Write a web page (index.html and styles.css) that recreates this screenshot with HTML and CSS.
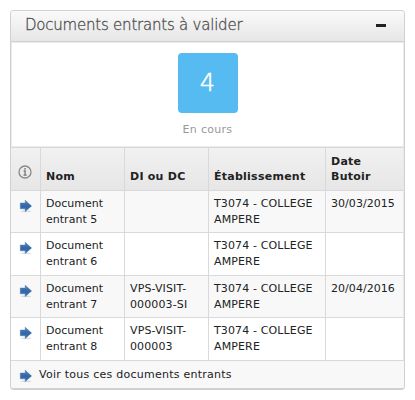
FILE: index.html
```html
<!DOCTYPE html>
<html lang="fr">
<head>
<meta charset="utf-8">
<title>Documents entrants</title>
<link rel="stylesheet" href="styles.css">
</head>
<body>
<svg class="defs" aria-hidden="true">
  <linearGradient id="blue" x1="0" y1="0" x2="0" y2="1"><stop offset="0" stop-color="#5c8cc6"/><stop offset=".5" stop-color="#3465a4"/><stop offset="1" stop-color="#3b74b8"/></linearGradient>
  <symbol id="arrow" viewBox="0 0 14 14"><ellipse cx="7" cy="12.3" rx="5" ry=".9" fill="#000" opacity=".13"/><path d="M1.3 4h4.9V1.2L12.6 7l-6.4 5.6V9.8H1.3z" fill="url(#blue)" stroke="#3a6cae" stroke-width=".4"/></symbol>
</svg>
<section class="panel">
  <header class="panel-head"><h1>Documents entrants à valider</h1><span class="collapse"></span></header>
  <div class="summary"><div class="tile">4</div><p>En cours</p></div>
  <table>
    <colgroup><col class="c1"><col class="c2"><col class="c3"><col class="c4"><col class="c5"></colgroup>
    <thead><tr><th class="ic"><svg class="info" viewBox="0 0 14 14"><circle cx="7" cy="7" r="6" fill="none" stroke="#888" stroke-width="1.3"/><path d="M5.6 6H7.1V10M5.5 10.1h3.2" fill="none" stroke="#777" stroke-width="1.3"/><circle cx="7" cy="3.8" r=".9" fill="#777"/></svg></th><th>Nom</th><th>DI ou DC</th><th>Établissement</th><th>Date Butoir</th></tr></thead>
    <tbody>
      <tr class="odd"><td class="ic"><svg class="arrow"><use href="#arrow"/></svg></td><td>Document entrant 5</td><td></td><td>T3074 - COLLEGE AMPERE</td><td>30/03/2015</td></tr>
      <tr class="tall"><td class="ic"><svg class="arrow"><use href="#arrow"/></svg></td><td>Document entrant 6</td><td></td><td>T3074 - COLLEGE AMPERE</td><td></td></tr>
      <tr class="odd"><td class="ic"><svg class="arrow"><use href="#arrow"/></svg></td><td>Document entrant 7</td><td>VPS-VISIT-000003-SI</td><td>T3074 - COLLEGE AMPERE</td><td>20/04/2016</td></tr>
      <tr class="tall"><td class="ic"><svg class="arrow"><use href="#arrow"/></svg></td><td>Document entrant 8</td><td>VPS-VISIT-000003</td><td>T3074 - COLLEGE AMPERE</td><td></td></tr>
    </tbody>
  </table>
  <footer><svg class="arrow"><use href="#arrow"/></svg><span>Voir tous ces documents entrants</span></footer>
</section>
</body>
</html>
```
FILE: styles.css
```css
* { box-sizing: border-box; }
body { margin: 0; padding: 10px; background: #fff; color: #222; font: 11px/15.5px "DejaVu Sans", sans-serif; letter-spacing: .2px; }
.defs { position: absolute; width: 0; height: 0; }
.panel { width: 395px; height: 380px; border: 1px solid #d0d0d0; border-bottom-width: 2px; border-radius: 4px; overflow: hidden; }
.panel-head { height: 31px; display: flex; align-items: center; justify-content: space-between; padding: 0 18px 2px 14px; border-bottom: 1px solid #d0d0d0; background: linear-gradient(#fafafa, #e6e6e6); }
h1 { margin: 0; font: 200 15px/20px "DejaVu Sans Light", "DejaVu Sans", sans-serif; letter-spacing: -.22px; color: #444; -webkit-text-stroke: .3px #555; }
.collapse { width: 10px; height: 3px; background: #222; }
.summary { height: 105px; padding-top: 10px; border: 1px solid #ebebeb; display: flex; flex-direction: column; align-items: center; }
.tile { width: 60px; height: 60px; border-radius: 4px; background: #55bbf0; color: #fff; font: 200 24px/60px "DejaVu Sans Light", "DejaVu Sans", sans-serif; text-align: center; letter-spacing: 0; -webkit-text-stroke: .5px #fff; }
.summary p { margin: 9px 0 0; color: #999; letter-spacing: .3px; }
table { width: 393px; table-layout: fixed; border-collapse: separate; border-spacing: 0; }
.c1 { width: 30px; } .c2, .c3 { width: 84px; } .c4 { width: 117px; } .c5 { width: 78px; }
th, td { border-right: 1px solid #d9d9d9; border-bottom: 1px solid #d9d9d9; padding: 5px 4px 0 5px; text-align: left; vertical-align: top; }
th:last-child, td:last-child { border-right-color: #e8e8e8; }
th { height: 44px; border-top: 1px solid #d9d9d9; background: linear-gradient(#f1f1f1, #e6e6e6); line-height: 15px; padding: 0 4px 6px 5px; vertical-align: bottom; letter-spacing: .25px; }
td { height: 42px; }
td:nth-child(2) { letter-spacing: .02px; }
td:nth-child(3) { letter-spacing: .12px; }
td:nth-child(4) { letter-spacing: .13px; }
td:last-child { letter-spacing: .05px; }
.tall td { height: 43px; }
.odd td { background: #f8f8f8; }
th.ic { padding: 0 0 11px 7px; }
td.ic { padding: 8px 0 0 8px; }
svg { display: block; }
.info, .arrow { width: 14px; height: 14px; }
footer { height: 28px; display: flex; align-items: flex-start; gap: 6px; padding: 8px 0 0 8px; background: #f8f8f8; letter-spacing: .25px; }
footer span { margin-top: -2px; }
```
